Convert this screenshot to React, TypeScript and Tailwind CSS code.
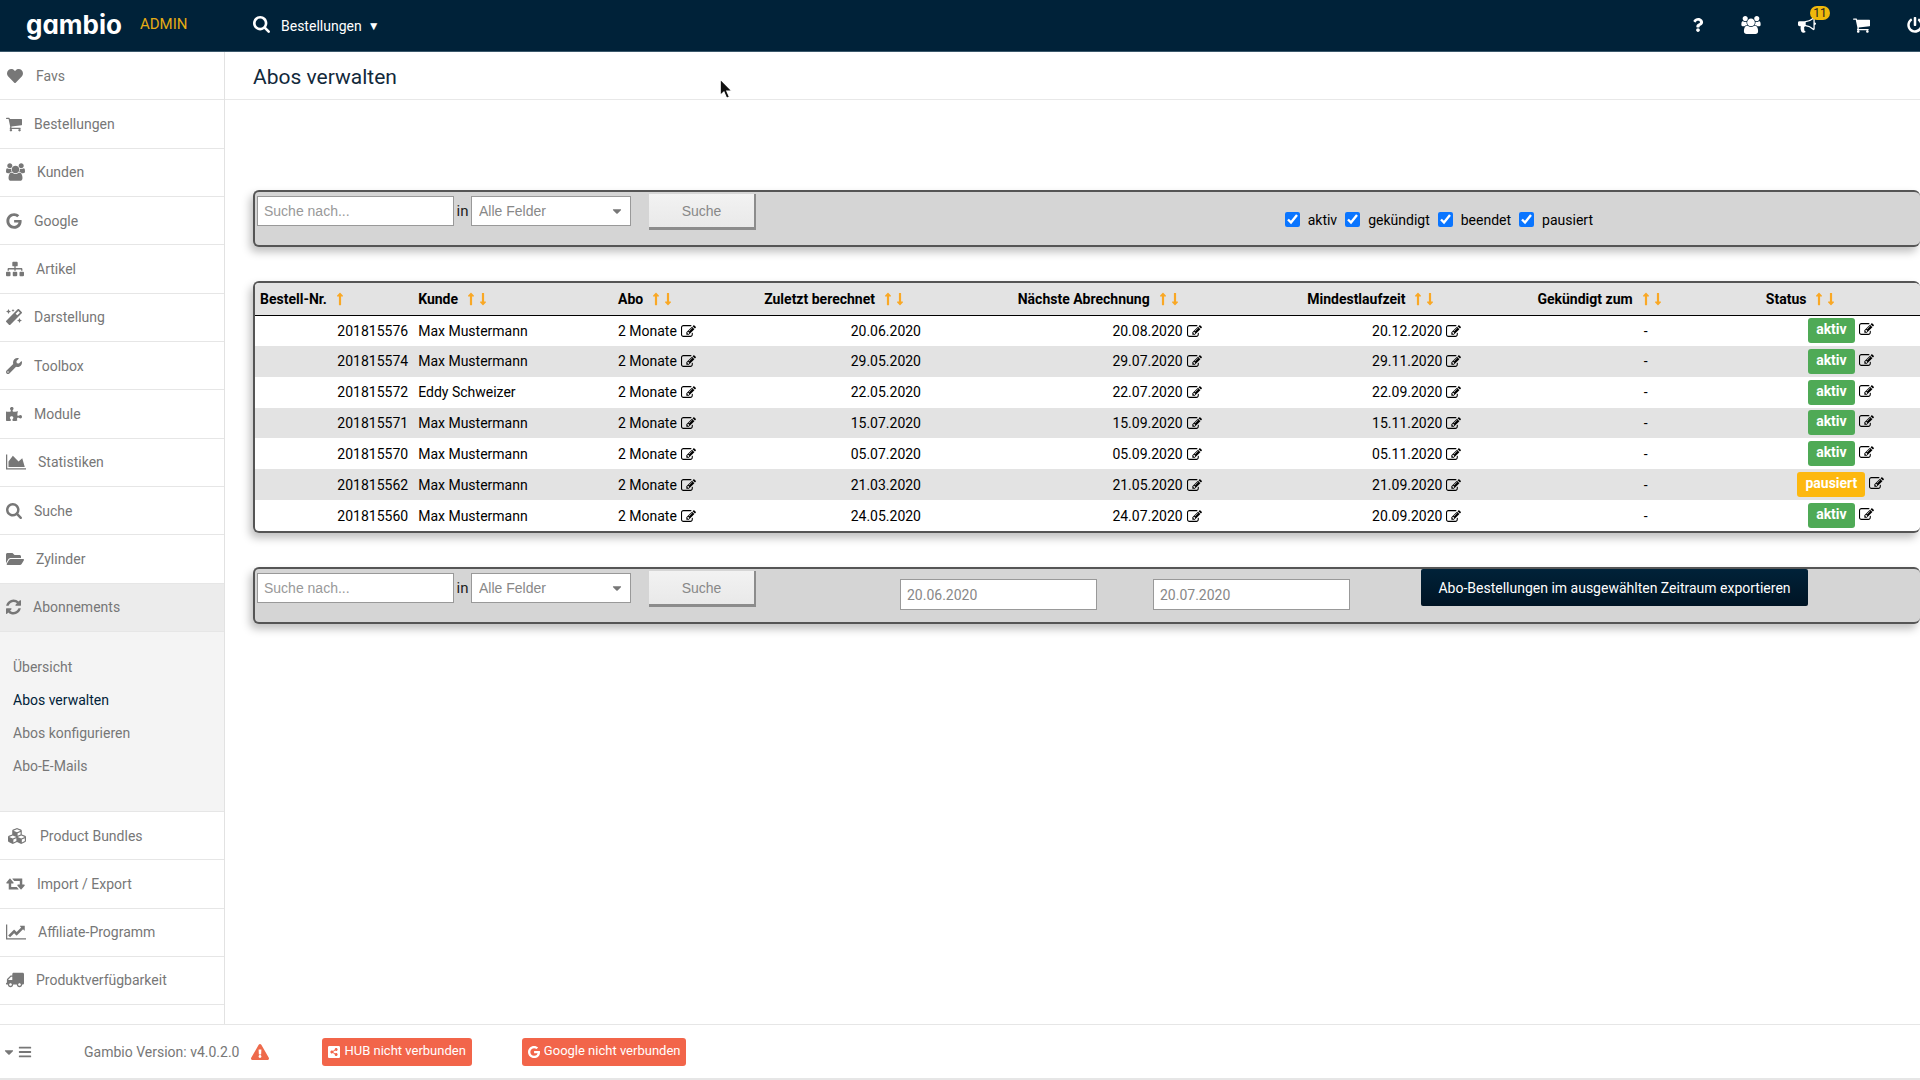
import React from 'react';
import {
  FaBars, FaCaretDown, FaCubes, FaExclamationTriangle, FaFolderOpen, FaGoogle, FaHeart, FaLongArrowAltDown,
  FaLongArrowAltUp, FaMagic, FaPowerOff, FaPuzzlePiece, FaQuestion, FaShareAltSquare, FaSitemap, FaTruck, FaWrench,
} from 'react-icons/fa';

type IconProps = { className?: string };

const CartIcon = ({ className }: IconProps) => (
  <svg viewBox="64 128 1664 1536" fill="currentColor" className={className} aria-hidden="true">
    <path d="M704 1536q0 52-38 90t-90 38-90-38-38-90 38-90 90-38 90 38 38 90zm896 0q0 52-38 90t-90 38-90-38-38-90 38-90 90-38 90 38 38 90zm128-1088v512q0 24-16.5 42.5t-40.5 21.5l-1044 122q13 60 13 70 0 16-24 64h920q26 0 45 19t19 45-19 45-45 19h-1024q-26 0-45-19t-19-45q0-11 8-31.5t16-36 21.5-40 15.5-29.5l-177-823h-204q-26 0-45-19t-19-45 19-45 45-19h256q16 0 28.5 6.5t19.5 15.5 13 24.5 8 26 5.5 29.5 4.5 26h1201q26 0 45 19t19 45z" />
  </svg>
);

const GroupIcon = ({ className }: IconProps) => (
  <svg viewBox="-64 0 1920 1792" fill="currentColor" className={className} aria-hidden="true">
    <path d="M529 896q-162 5-265 128h-134q-82 0-138-40.5t-56-118.5q0-353 124-353 6 0 43.5 21t97.5 42.5 119 21.5q67 0 133-23-5 37-5 66 0 139 81 256zm1071 637q0 120-73 189.5t-194 69.5h-874q-121 0-194-69.5t-73-189.5q0-53 3.5-103.5t14-109 26.5-108.5 43-97.5 62-81 85.5-53.5 111.5-20q10 0 43 21.5t73 48 107 48 135 21.5 135-21.5 107-48 73-48 43-21.5q61 0 111.5 20t85.5 53.5 62 81 43 97.5 26.5 108.5 14 109 3.5 103.5zm-1024-1277q0 106-75 181t-181 75-181-75-75-181 75-181 181-75 181 75 75 181zm704 384q0 159-112.5 271.5t-271.5 112.5-271.5-112.5-112.5-271.5 112.5-271.5 271.5-112.5 271.5 112.5 112.5 271.5zm576 225q0 78-56 118.5t-138 40.5h-134q-103-123-265-128 81-117 81-256 0-29-5-66 66 23 133 23 59 0 119-21.5t97.5-42.5 43.5-21q124 0 124 353zm-128-609q0 106-75 181t-181 75-181-75-75-181 75-181 181-75 181 75 75 181z" />
  </svg>
);

const BullhornIcon = ({ className }: IconProps) => (
  <svg viewBox="0 0 1792 1792" fill="currentColor" className={className} aria-hidden="true">
    <path d="M1664 640q53 0 90.5 37.5t37.5 90.5-37.5 90.5-90.5 37.5v384q0 52-38 90t-90 38q-417-347-812-380-58 19-91 66t-31 100.5 40 92.5q-20 33-23 65.5t6 58 33.5 55 48 50 61.5 50.5q-29 58-111.5 83t-168.5 11.5-132-55.5q-7-23-29.5-87.5t-32-94.5-23-89-15-101 3.5-98.5 22-110.5h-122q-66 0-113-47t-47-113v-192q0-66 47-113t113-47h480q435 0 896-384 52 0 90 38t38 90v384zm-128 604v-954q-394 302-768 343v270q377 42 768 341z" />
  </svg>
);

const SearchIcon = ({ className }: IconProps) => (
  <svg viewBox="64 128 1664 1664" fill="currentColor" className={className} aria-hidden="true">
    <path d="M1216 832q0-185-131.5-316.5t-316.5-131.5-316.5 131.5-131.5 316.5 131.5 316.5 316.5 131.5 316.5-131.5 131.5-316.5zm512 832q0 52-38 90t-90 38q-54 0-90-38l-343-342q-179 124-399 124-143 0-273.5-55.5t-225-150-150-225-55.5-273.5 55.5-273.5 150-225 225-150 273.5-55.5 273.5 55.5 225 150 150 225 55.5 273.5q0 220-124 399l343 343q37 37 37 90z" />
  </svg>
);

const EditIcon = ({ className }: IconProps) => (
  <svg viewBox="0 128 1792 1408" fill="currentColor" className={className} aria-hidden="true">
    <path d="M888 1184l116-116-152-152-116 116v56h96v96h56zm440-720q-16-16-33 1l-350 350q-17 17-1 33t33-1l350-350q17-17 1-33zm80 594v190q0 119-84.5 203.5t-203.5 84.5h-832q-119 0-203.5-84.5t-84.5-203.5v-832q0-119 84.5-203.5t203.5-84.5h832q63 0 117 25 15 7 18 23 3 17-9 29l-49 49q-14 14-32 8-23-6-45-6h-832q-66 0-113 47t-47 113v832q0 66 47 113t113 47h832q66 0 113-47t47-113v-126q0-13 9-22l64-64q15-15 35-7t20 29zm-96-738l288 288-672 672h-288v-288zm444 132l-92 92-288-288 92-92q28-28 68-28t68 28l152 152q28 28 28 68t-28 68z" />
  </svg>
);

const AreaChartIcon = ({ className }: IconProps) => (
  <svg viewBox="0 0 2048 1792" fill="currentColor" className={className} aria-hidden="true">
    <path d="M2048 1536v128h-2048v-1536h128v1408h1920zm-384-1024l256 896h-1664v-576l448-576 576 576z" />
  </svg>
);

const LineChartIcon = ({ className }: IconProps) => (
  <svg viewBox="0 0 2048 1792" fill="currentColor" className={className} aria-hidden="true">
    <path d="M2048 1536v128h-2048v-1536h128v1408h1920zm-128-1248v435q0 21-19.5 29.5t-35.5-7.5l-121-121-633 633q-10 10-23 10t-23-10l-233-233-416 416-192-192 585-585q10-10 23-10t23 10l233 233 464-464-121-121q-16-16-7.5-35.5t29.5-19.5h435q14 0 23 9t9 23z" />
  </svg>
);

const RetweetIcon = ({ className }: IconProps) => (
  <svg viewBox="0 128 1920 1664" fill="currentColor" className={className} aria-hidden="true">
    <path d="M1280 1504q0 13-9.5 22.5t-22.5 9.5h-960q-8 0-13.5-2t-9-7-5.5-8-3-11.5-1-11.5v-600h-192q-26 0-45-19t-19-45q0-24 15-41l320-384q19-22 49-22t49 22l320 384q15 17 15 41 0 26-19 45t-45 19h-192v384h576q16 0 25 11l160 192q7 10 7 21zm640-416q0 24-15 41l-320 384q-20 23-49 23t-49-23l-320-384q-15-17-15-41 0-26 19-45t45-19h192v-384h-576q-16 0-25-12l-160-192q-7-9-7-20 0-13 9.5-22.5t22.5-9.5h960q8 0 13.5 2t9 7 5.5 8 3 11.5 1 11.5v600h192q26 0 45 19t19 45z" />
  </svg>
);

const RefreshIcon = ({ className }: IconProps) => (
  <svg viewBox="128 128 1536 1536" fill="currentColor" className={className} aria-hidden="true">
    <path d="M1639 1056q0 5-1 7-64 268-268 434.5t-478 166.5q-146 0-282.5-55t-243.5-157l-129 129q-19 19-45 19t-45-19-19-45v-448q0-26 19-45t45-19h448q26 0 45 19t19 45-19 45l-137 137q71 66 161 102t187 36q134 0 250-65t186-179q11-17 53-117 8-23 30-23h192q13 0 22.5 9.5t9.5 22.5zm25-800v448q0 26-19 45t-45 19h-448q-26 0-45-19t-19-45 19-45l138-138q-148-137-349-137-134 0-250 65t-186 179q-11 17-53 117-8 23-30 23h-199q-13 0-22.5-9.5t-9.5-22.5v-7q65-268 270-434.5t480-166.5q146 0 284 55.5t245 156.5l130-129q19-19 45-19t45 19 19 45z" />
  </svg>
);

const mainMenu = [
  { label: 'Favs', icon: <FaHeart className="w-[18px] h-4" /> },
  { label: 'Bestellungen', icon: <CartIcon className="w-4 h-4" /> },
  { label: 'Kunden', icon: <GroupIcon className="w-[19px] h-[18px]" /> },
  { label: 'Google', icon: <FaGoogle className="w-4 h-4" /> },
  { label: 'Artikel', icon: <FaSitemap className="w-[18px] h-4" /> },
  { label: 'Darstellung', icon: <FaMagic className="w-4 h-4" /> },
  { label: 'Toolbox', icon: <FaWrench className="w-4 h-4" /> },
  { label: 'Module', icon: <FaPuzzlePiece className="w-4 h-4" /> },
  { label: 'Statistiken', icon: <AreaChartIcon className="w-5 h-[18px]" /> },
  { label: 'Suche', icon: <SearchIcon className="w-4 h-4" /> },
  { label: 'Zylinder', icon: <FaFolderOpen className="w-[18px] h-4" /> },
  { label: 'Abonnements', icon: <RefreshIcon className="w-[15px] h-4" />, active: true },
];

const moreMenu = [
  { label: 'Product Bundles', icon: <FaCubes className="w-[22px] h-[18px]" /> },
  { label: 'Import / Export', icon: <RetweetIcon className="w-[19px] h-4" /> },
  { label: 'Affiliate-Programm', icon: <LineChartIcon className="w-5 h-[18px]" /> },
  { label: 'Produktverfügbarkeit', icon: <FaTruck className="w-[18px] h-4 -scale-x-100" /> },
];

const subMenu = ['Übersicht', 'Abos verwalten', 'Abos konfigurieren', 'Abo-E-Mails'];

const orders = [
  { nr: '201815576', customer: 'Max Mustermann', last: '20.06.2020', next: '20.08.2020', min: '20.12.2020', status: 'aktiv' },
  { nr: '201815574', customer: 'Max Mustermann', last: '29.05.2020', next: '29.07.2020', min: '29.11.2020', status: 'aktiv' },
  { nr: '201815572', customer: 'Eddy Schweizer', last: '22.05.2020', next: '22.07.2020', min: '22.09.2020', status: 'aktiv' },
  { nr: '201815571', customer: 'Max Mustermann', last: '15.07.2020', next: '15.09.2020', min: '15.11.2020', status: 'aktiv' },
  { nr: '201815570', customer: 'Max Mustermann', last: '05.07.2020', next: '05.09.2020', min: '05.11.2020', status: 'aktiv' },
  { nr: '201815562', customer: 'Max Mustermann', last: '21.03.2020', next: '21.05.2020', min: '21.09.2020', status: 'pausiert' },
  { nr: '201815560', customer: 'Max Mustermann', last: '24.05.2020', next: '24.07.2020', min: '20.09.2020', status: 'aktiv' },
];

function MenuItem({ label, icon, active }: { label: string; icon: React.ReactNode; active?: boolean }) {
  return (
    <li className={active ? 'border-b border-[#e6e6e6] bg-[#ececec]' : 'border-b border-[#e6e6e6]'}>
      <a href="#" className="flex items-center gap-3 h-full pl-1.5">
        {icon}
        <span>{label}</span>
      </a>
    </li>
  );
}

function SortArrows({ onlyUp }: { onlyUp?: boolean }) {
  return (
    <span className="inline-flex gap-1 ml-[9px] text-[#f9a825] align-[-2px]">
      <button type="button" aria-label="aufsteigend"><FaLongArrowAltUp className="w-2 h-3.5" /></button>
      {!onlyUp && <button type="button" aria-label="absteigend"><FaLongArrowAltDown className="w-2 h-3.5" /></button>}
    </span>
  );
}

function EditButton() {
  return (
    <button type="button" aria-label="Bearbeiten" className="ml-1 align-[-1px]">
      <EditIcon className="w-[15px] h-3" />
    </button>
  );
}

function SearchFields({ id }: { id: string }) {
  return (
    <div className="flex items-start font-['Liberation_Sans',sans-serif]">
      <input
        type="text"
        aria-label="Suche nach"
        placeholder="Suche nach..."
        className="w-[197px] h-[30px] mt-1 px-1.5 bg-white border border-[#999] placeholder:text-[#999]"
      />
      <label htmlFor={id} className="w-[17px] mt-1 text-center text-[15px] leading-[30px] text-[#222] font-[Roboto,sans-serif]">in</label>
      <div className="relative mt-1">
        <select id={id} className="appearance-none w-40 h-[30px] px-[7px] bg-white border border-[#999] text-[#888]">
          <option>Alle Felder</option>
        </select>
        <FaCaretDown className="absolute right-2 top-2 w-3 h-3.5 text-[#777] pointer-events-none" />
      </div>
      <button
        type="button"
        className="w-[107px] h-9 ml-[18px] mt-0.5 bg-linear-to-b from-[#f2f2f2] to-[#e9e9e9] border-r-2 border-b-3 border-[#8c8c8c] text-[#888]"
      >
        Suche
      </button>
    </div>
  );
}

const panel = 'border-y-2 border-l-2 border-[#555] rounded-md shadow-[-3px_5px_8px_rgba(0,0,0,0.25)]';

export default function App() {
  return (
    <div className="flex flex-col h-screen overflow-hidden bg-white font-[Roboto,sans-serif] text-sm">
      {/* Top bar */}
      <header className="flex items-center shrink-0 h-[52px] pb-0.5 bg-[#002239] border-b border-[#3b586b] text-white">
        <div className="flex items-center w-[253px] pl-[26px] gap-[18px]">
          <span className="text-[26px] leading-8 font-bold font-[Inter,sans-serif] [font-feature-settings:'cv11']">gambio</span>
          <span className="text-[15px] text-[#e5ac14]">ADMIN</span>
        </div>
        <button type="button" className="flex items-center">
          <SearchIcon className="w-[17px] h-[17px]" />
          <span className="ml-[11px] mt-0.5">Bestellungen</span>
          <span className="ml-1.5 mt-0.5 text-xs">▼</span>
        </button>
        <nav className="flex items-center ml-auto -mr-[3px] gap-[37px]">
          <a href="#" aria-label="Hilfe"><FaQuestion className="w-3 h-3.5" /></a>
          <a href="#" aria-label="Kunden"><GroupIcon className="w-5 h-[18px]" /></a>
          <a href="#" aria-label="Neuigkeiten" className="relative">
            <BullhornIcon className="w-[18px] h-[18px]" />
            <span className="absolute -top-2.5 left-3 w-5 h-3.5 rounded-full bg-[#f0b90b] text-[#222] text-xs leading-[14px] text-center">11</span>
          </a>
          <a href="#" aria-label="Warenkorb"><CartIcon className="w-[17px] h-4" /></a>
          <a href="#" aria-label="Abmelden"><FaPowerOff className="w-4 h-4" /></a>
        </nav>
      </header>

      <div className="flex flex-1 min-h-0">
        {/* Sidebar */}
        <aside className="w-[225px] shrink-0 overflow-hidden border-r border-[#e2e2e2] text-[#777]">
          <ul className="grid auto-rows-fr h-[580px]">
            {mainMenu.map((item) => <MenuItem key={item.label} {...item} />)}
          </ul>
          <ul className="flex flex-col h-[179px] pt-[19px] pl-[13px] bg-[#f4f4f4]">
            {subMenu.map((label) => (
              <li key={label} className="h-[33px] leading-[33px]">
                <a href="#" className={label === 'Abos verwalten' ? 'text-[#002239]' : ''}>{label}</a>
              </li>
            ))}
          </ul>
          <ul className="grid auto-rows-fr h-[194px] border-t border-[#e6e6e6]">
            {moreMenu.map((item) => <MenuItem key={item.label} {...item} />)}
          </ul>
        </aside>

        <main className="relative flex-1 min-w-0">
          <div className="flex items-center h-12 pt-0.5 pl-7 border-b border-[#e8e8e8]">
            <h1 className="text-[21px] text-[#12293b]">Abos verwalten</h1>
          </div>

          <svg viewBox="0 0 12 19" className="absolute left-[494px] top-[26px] w-3.5 h-[22px]" aria-hidden="true">
            <path d="M1 1v14l3.200-3 2.300 5.500 2.500-1-2.300-5.300h4.300z" fill="#111" stroke="#fff" />
          </svg>

          <div className="flex flex-col gap-[34px] pt-[90px] pl-7 text-black">
            {/* Search and status filter */}
            <form className={`flex justify-between h-[57px] pl-0.5 bg-[#d5d5d5] ${panel}`}>
              <SearchFields id="field-top" />
              <div className="flex items-center gap-2 mt-0.5 mr-[327px]">
                {['aktiv', 'gekündigt', 'beendet', 'pausiert'].map((label) => (
                  <label key={label} className="flex items-center gap-2">
                    <input type="checkbox" defaultChecked className="w-[15px] h-[15px] accent-[#0a75ff]" />
                    {label}
                  </label>
                ))}
              </div>
            </form>

            {/* Subscriptions */}
            <div className={`overflow-hidden ${panel}`}>
              <table className="w-full h-[248px] table-fixed">
                <colgroup>
                  <col className="w-[9.5%]" />
                  <col className="w-[12%]" />
                  <col className="w-[7.7%]" />
                  <col className="w-[11.1%]" />
                  <col className="w-[16.8%]" />
                  <col className="w-[15.6%]" />
                  <col className="w-[17.8%]" />
                  <col />
                </colgroup>
                <thead className="bg-[#e3e3e3] border-b border-black">
                  <tr className="h-8 text-left whitespace-nowrap">
                    <th className="pl-[5px]">Bestell-Nr.<SortArrows onlyUp /></th>
                    <th className="pl-[5px]">Kunde<SortArrows /></th>
                    <th className="pl-[5px]">Abo<SortArrows /></th>
                    <th className="pr-[22px] text-right">Zuletzt berechnet<SortArrows /></th>
                    <th className="pr-[27px] text-right">Nächste Abrechnung<SortArrows /></th>
                    <th className="pr-[31px] text-right">Mindestlaufzeit<SortArrows /></th>
                    <th className="pl-[72px]">Gekündigt zum<SortArrows /></th>
                    <th className="pl-1">Status<SortArrows /></th>
                  </tr>
                </thead>
                <tbody>
                  {orders.map((order) => (
                    <tr key={order.nr} className="h-[30px] whitespace-nowrap even:bg-[#e3e3e3]">
                      <td className="pr-[5px] text-right">{order.nr}</td>
                      <td className="pl-[5px]">{order.customer}</td>
                      <td className="pl-[5px]">2 Monate<EditButton /></td>
                      <td className="pr-[5px] text-right">{order.last}</td>
                      <td className="pr-1 text-right">{order.next}<EditButton /></td>
                      <td className="pr-1 text-right">{order.min}<EditButton /></td>
                      <td className="pl-16 text-center">-</td>
                      <td className="text-center">
                        <span
                          className={
                            order.status === 'aktiv'
                              ? 'inline-block h-[25px] px-2 rounded-[3px] bg-[#4faa56] font-bold leading-[23px] text-white'
                              : 'inline-block h-[25px] px-2 rounded-[3px] bg-[#fdb80f] font-bold leading-[23px] text-white'
                          }
                        >
                          {order.status}
                        </span>
                        <EditButton />
                      </td>
                    </tr>
                  ))}
                </tbody>
              </table>
            </div>

            {/* Search and export */}
            <form className={`flex items-start h-[57px] pl-0.5 bg-[#d5d5d5] ${panel}`}>
              <SearchFields id="field-bottom" />
              <input
                type="text"
                aria-label="Von"
                defaultValue="20.06.2020"
                className="w-[197px] h-[31px] ml-36 mt-2.5 px-1.5 bg-white border border-[#999] text-[#888]"
              />
              <input
                type="text"
                aria-label="Bis"
                defaultValue="20.07.2020"
                className="w-[197px] h-[31px] ml-14 mt-2.5 px-1.5 bg-white border border-[#999] text-[#888]"
              />
              <button type="button" className="w-[387px] h-[37px] ml-[71px] rounded-[2px] bg-linear-to-b from-[#002239] to-[#001424] text-white">
                Abo-Bestellungen im ausgewählten Zeitraum exportieren
              </button>
            </form>
          </div>
        </main>
      </div>

      {/* Status bar */}
      <footer className="flex items-center shrink-0 h-14 pl-1 bg-white border-t border-b-2 border-[#e6e6e6] text-[#777]">
        <button type="button" aria-label="Menü" className="flex items-center gap-1">
          <FaCaretDown className="w-2.5 h-3.5" />
          <FaBars className="w-3.5 h-3.5" />
        </button>
        <span className="ml-[52px]">Gambio Version: v4.0.2.0</span>
        <FaExclamationTriangle className="w-[18px] h-[18px] ml-3 text-[#ee6a4b]" />
        <button type="button" className="flex items-center gap-1 h-7 ml-[53px] px-1.5 rounded-[3px] bg-[#f2654a] text-[13px] text-white">
          <FaShareAltSquare className="w-3 h-3.5" />
          HUB nicht verbunden
        </button>
        <button type="button" className="flex items-center gap-1 h-7 ml-[50px] px-1.5 rounded-[3px] bg-[#f2654a] text-[13px] text-white">
          <FaGoogle className="w-3 h-3.5" />
          Google nicht verbunden
        </button>
      </footer>
    </div>
  );
}
